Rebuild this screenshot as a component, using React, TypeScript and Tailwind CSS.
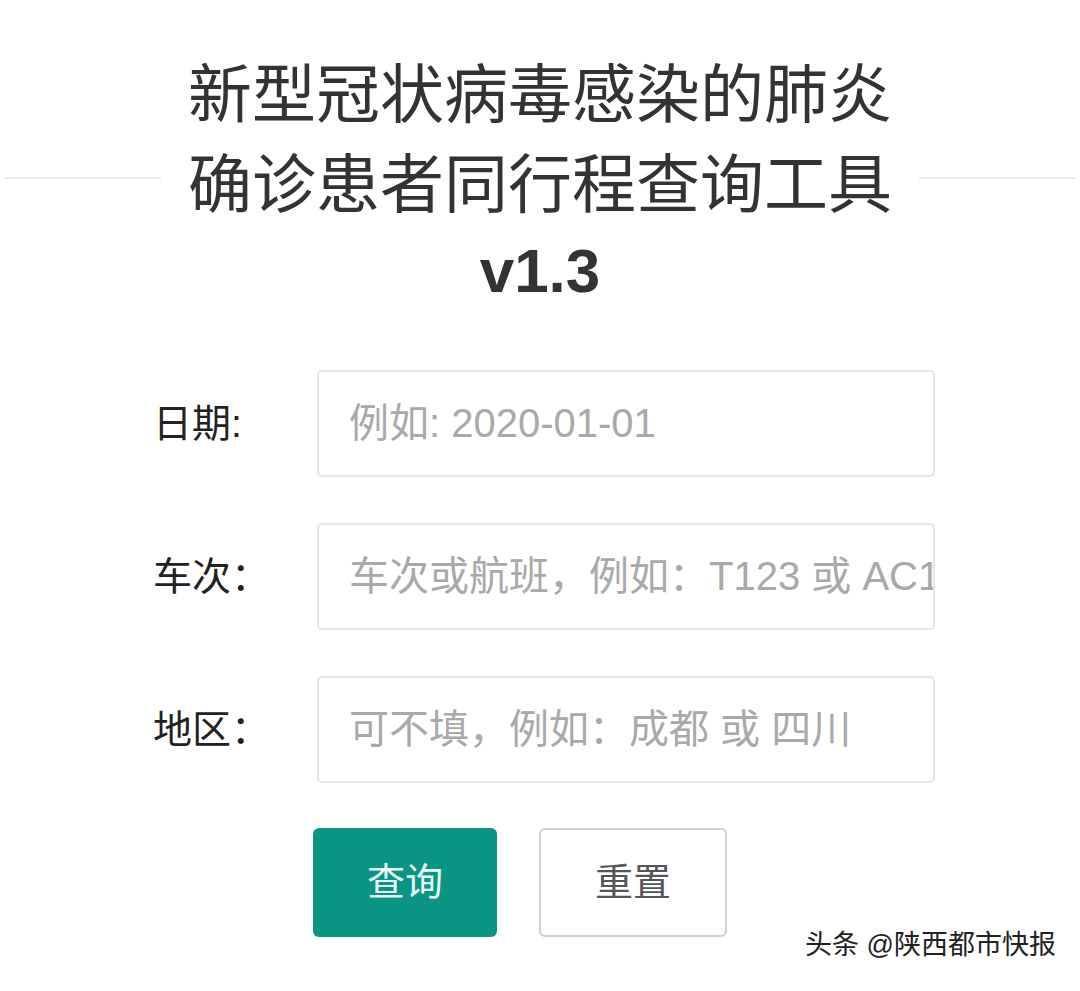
const cjk = "font-['Liberation_Sans','Noto_Sans_CJK_SC',sans-serif]";

function Field({ label, placeholder }: { label: string; placeholder: string }) {
  return (
    <div className="flex items-center">
      <label className="w-[164px] shrink-0 text-[39px] leading-none text-[#222]">{label}</label>
      <input
        type="text"
        placeholder={placeholder}
        className="h-[107px] w-[618px] rounded-[5px] border-2 border-[#e6e6e6] bg-white pl-[30px] pr-0 text-[40px] text-[#333] outline-none placeholder:text-[#a9a9a9]"
      />
    </div>
  );
}

export default function App() {
  return (
    <div className={`min-h-[991px] w-[1080px] bg-white ${cjk}`}>
      <div className="flex items-center pt-[50px]">
        <div className="ml-[5px] h-[2px] flex-1 bg-[#ececec]" />
        <div className="w-[758px] whitespace-nowrap text-center">
          <h1 className="text-[64px] font-normal leading-[90px] text-[#333]">
            新型冠状病毒感染的肺炎
            <br />
            确诊患者同行程查询工具
          </h1>
          <div className="mt-[6px] text-[62px] font-bold leading-[70px] text-[#333]">v1.3</div>
        </div>
        <div className="mr-[5px] h-[2px] flex-1 bg-[#ececec]" />
      </div>

      <form className="mt-[64px] flex flex-col gap-[46px] pl-[153px]">
        <Field label="日期:" placeholder="例如: 2020-01-01" />
        <Field label="车次：" placeholder="车次或航班，例如：T123 或 AC1234" />
        <Field label="地区：" placeholder="可不填，例如：成都 或 四川" />
      </form>

      <div className="mt-[45px] flex gap-[42px] pl-[313px]">
        <button
          type="button"
          className="h-[109px] w-[184px] rounded-[6px] bg-[#0a9484] text-[38px] text-[#e9fbf7]"
        >
          查询
        </button>
        <button
          type="button"
          className="h-[109px] w-[188px] rounded-[6px] border-2 border-[#cfcfcf] bg-white text-[38px] text-[#555]"
        >
          重置
        </button>
      </div>

      <div className="-mt-[12px] flex justify-end pr-[24px]">
        <span className="text-[27px] text-[#222] [text-shadow:1px_1px_0_#fff,-1px_-1px_0_#fff]">
          头条 @陕西都市快报
        </span>
      </div>
    </div>
  );
}
